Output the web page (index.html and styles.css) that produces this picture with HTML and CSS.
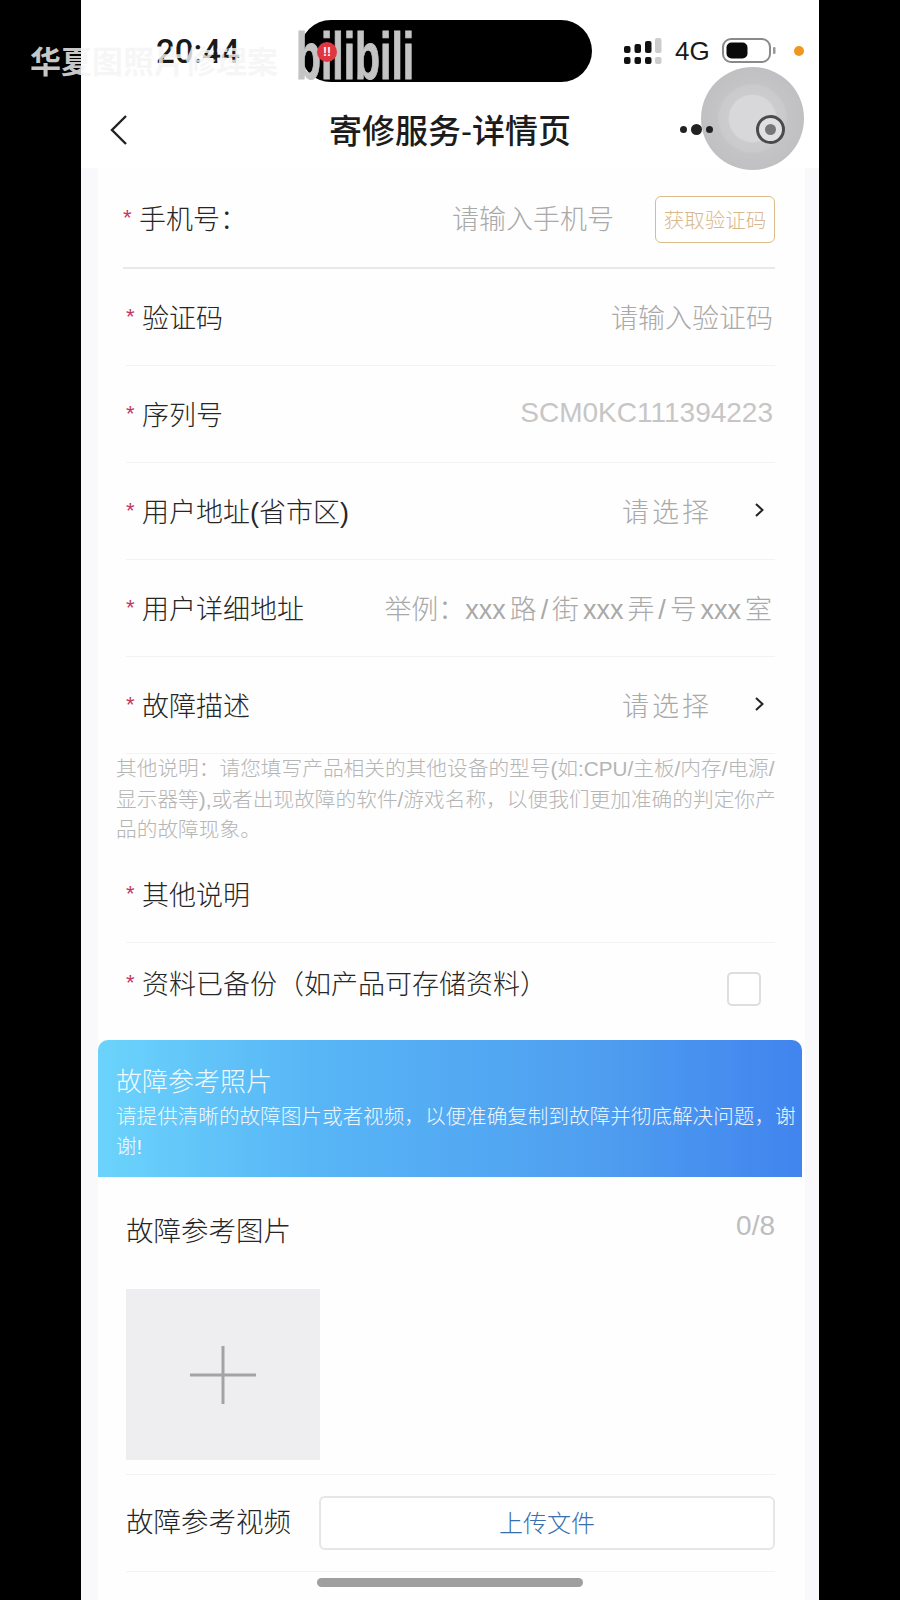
FILE: index.html
```html
<!DOCTYPE html>
<html lang="zh-CN">
<head>
    <meta charset="UTF-8">
    <meta name="viewport" content="width=device-width, initial-scale=1.0">
    <title>寄修服务-详情页</title>
    <link rel="stylesheet" href="styles.css">
</head>
<body>
    <div class="phone">
        <div class="status-bar">
            <span class="time">20:44</span>
            <div class="island">
                <span class="logo-text">bilibili</span>
                <span class="logo-dot">!!</span>
            </div>
            <div class="status-right">
                <svg class="signal" width="38" height="26" viewBox="0 0 38 26">
                    <rect x="0" y="8" width="6.5" height="7" rx="2" fill="#111"/>
                    <rect x="10.5" y="6" width="6.5" height="9" rx="2" fill="#111"/>
                    <rect x="21" y="3" width="6.5" height="12" rx="2" fill="#111"/>
                    <rect x="31" y="0" width="6.5" height="15" rx="2" fill="#ccc"/>
                    <rect x="0" y="19" width="6.5" height="7" rx="2" fill="#111"/>
                    <rect x="10.5" y="19" width="6.5" height="7" rx="2" fill="#111"/>
                    <rect x="21" y="19" width="6.5" height="7" rx="2" fill="#111"/>
                    <rect x="31" y="19" width="6.5" height="7" rx="2" fill="#ccc"/>
                </svg>
                <span class="net">4G</span>
                <svg class="battery" width="54" height="26" viewBox="0 0 54 26">
                    <rect x="1" y="1" width="47" height="23" rx="8" fill="#fff" stroke="#8a8a8a" stroke-width="2"/>
                    <rect x="4.5" y="4.5" width="21" height="16" rx="5" fill="#0a0a0a"/>
                    <rect x="51" y="9" width="2.5" height="7" rx="1" fill="#999"/>
                </svg>
                <span class="orange-dot"></span>
            </div>
        </div>

        <div class="nav-bar">
            <svg class="back" width="18" height="30" viewBox="0 0 18 30">
                <path d="M16 1 L2 15 L16 29" fill="none" stroke="#222" stroke-width="2.4"/>
            </svg>
            <h1 class="nav-title">寄修服务-详情页</h1>
        </div>

        <div class="float-ball"></div>
        <div class="menu-dots"><i></i><i class="big"></i><i></i></div>
        <div class="target"><i></i></div>

        <div class="content">
            <div class="card">
                <div class="row row-first">
                    <div class="label"><span class="star">*</span>手机号：</div>
                    <div class="placeholder">请输入手机号</div>
                    <button class="code-btn">获取验证码</button>
                </div>
                <div class="row">
                    <div class="label"><span class="star">*</span>验证码</div>
                    <div class="placeholder">请输入验证码</div>
                </div>
                <div class="row">
                    <div class="label"><span class="star">*</span>序列号</div>
                    <div class="placeholder serial">SCM0KC111394223</div>
                </div>
                <div class="row">
                    <div class="label"><span class="star">*</span>用户地址(省市区)</div>
                    <div class="placeholder pick">请选择</div>
                    <svg class="chevron" width="11" height="16" viewBox="0 0 11 16">
                        <path d="M2 2 L8.5 8 L2 14" fill="none" stroke="#222" stroke-width="2"/>
                    </svg>
                </div>
                <div class="row">
                    <div class="label"><span class="star">*</span>用户详细地址</div>
                    <div class="placeholder addr">举例：xxx 路 / 街 xxx 弄 / 号 xxx 室</div>
                </div>
                <div class="row">
                    <div class="label"><span class="star">*</span>故障描述</div>
                    <div class="placeholder pick">请选择</div>
                    <svg class="chevron" width="11" height="16" viewBox="0 0 11 16">
                        <path d="M2 2 L8.5 8 L2 14" fill="none" stroke="#222" stroke-width="2"/>
                    </svg>
                </div>

                <p class="note">其他说明：请您填写产品相关的其他设备的型号(如:CPU/主板/内存/电源/显示器等),或者出现故障的软件/游戏名称，以便我们更加准确的判定你产品的故障现象。</p>

                <div class="row">
                    <div class="label"><span class="star">*</span>其他说明</div>
                </div>
                <div class="row row-check">
                    <div class="label"><span class="star">*</span>资料已备份（如产品可存储资料）</div>
                    <span class="checkbox"></span>
                </div>

                <div class="banner">
                    <div class="banner-title">故障参考照片</div>
                    <div class="banner-desc">请提供清晰的故障图片或者视频，以便准确复制到故障并彻底解决问题，谢谢!</div>
                </div>

                <div class="upload-section">
                    <div class="upload-head">
                        <span class="upload-label">故障参考图片</span>
                        <span class="counter">0/8</span>
                    </div>
                    <div class="add-box">
                        <svg width="66" height="58" viewBox="0 0 66 58">
                            <path d="M0 29 H66 M33 0 V58" stroke="#a3a3a5" stroke-width="3" fill="none"/>
                        </svg>
                    </div>
                </div>

                <div class="row row-video">
                    <span class="upload-label">故障参考视频</span>
                    <button class="file-btn">上传文件</button>
                </div>
            </div>
        </div>

        <div class="home-bar"></div>
    </div>

    <div class="watermark">华夏图照片修理案</div>
</body>
</html>
```

FILE: styles.css
```css
* {
    box-sizing: border-box;
}

html, body {
    margin: 0;
    background-color: #000;
}

body {
    position: relative;
    font-family: "Liberation Sans", "Noto Sans CJK SC", sans-serif;
    color: #2b2b2b;
}

.phone {
    position: relative;
    width: 738px;
    height: 1600px;
    margin-left: 81px;
    background-color: #f9f9fc;
    overflow: hidden;
}

/* status bar */
.status-bar {
    height: 100px;
    background: #fff;
    display: flex;
    align-items: flex-start;
}

.time {
    width: 219px;
    padding: 32px 0 0 75px;
    font-family: Roboto, sans-serif;
    font-size: 33px;
    line-height: 40px;
    font-weight: 500;
    color: #1a1a1a;
}

.island {
    position: relative;
    width: 292px;
    height: 62px;
    margin-top: 20px;
    background: #000;
    border-radius: 31px;
}

.logo-text {
    position: absolute;
    left: -4px;
    top: 3px;
    font-size: 66px;
    line-height: 66px;
    font-weight: bold;
    color: #c4c4c4;
    -webkit-text-stroke: 1px #c4c4c4;
    transform: scaleX(0.62);
    transform-origin: left top;
}

.logo-dot {
    position: absolute;
    left: 17px;
    top: 22px;
    width: 20px;
    height: 20px;
    border-radius: 50%;
    background: #e0363f;
    color: #fff;
    font-size: 12px;
    line-height: 20px;
    font-weight: bold;
    text-align: center;
}

.status-right {
    display: flex;
    align-items: center;
    margin: 36px 0 0 32px;
}

.net {
    margin-left: 13px;
    font-size: 26px;
    line-height: 30px;
    color: #1a1a1a;
}

.battery {
    margin-left: 12px;
}

.orange-dot {
    width: 10px;
    height: 10px;
    margin-left: 18px;
    border-radius: 50%;
    background: #f0961e;
}

/* nav */
.nav-bar {
    position: relative;
    height: 68px;
    background: #fff;
    display: flex;
    align-items: center;
    justify-content: center;
}

.back {
    position: absolute;
    left: 29px;
    top: 15px;
}

.nav-title {
    margin: -4px 0 0 0;
    font-size: 33px;
    font-weight: 500;
    line-height: 46px;
    color: #1c1c1c;
}

.watermark {
    position: absolute;
    left: 30px;
    top: 45px;
    font-size: 31px;
    line-height: 36px;
    font-weight: bold;
    color: rgba(245, 245, 245, 0.82);
}

.float-ball {
    position: absolute;
    left: 620px;
    top: 67px;
    width: 103px;
    height: 103px;
    border-radius: 50%;
    background: radial-gradient(circle at 50% 50%, #d8d8da 0, #d8d8da 23px, #ccccce 24.5px, #cacacc 33px, #c4c4c6 35px, #c0c0c2 52px);
}

.menu-dots {
    position: absolute;
    left: 599px;
    top: 124px;
    display: flex;
    align-items: center;
    gap: 4px;
}

.menu-dots i {
    width: 7px;
    height: 7px;
    border-radius: 50%;
    background: #222;
}

.menu-dots i.big {
    width: 11px;
    height: 11px;
}

.target {
    position: absolute;
    left: 675px;
    top: 115px;
    width: 29px;
    height: 29px;
    border: 3px solid #4a4a4a;
    border-radius: 50%;
    background: #e0e0e2;
    display: flex;
    align-items: center;
    justify-content: center;
}

.target i {
    width: 11px;
    height: 11px;
    border-radius: 50%;
    background: #77777a;
}

/* form */
.content {
    padding: 0 14px 0 17px;
}

.card {
    background: #fefefe;
    height: 1432px;
}

.row {
    display: flex;
    align-items: center;
    height: 97px;
    margin: 0 30px 0 28px;
    padding-bottom: 2px;
    border-bottom: 1px solid #f3f3f3;
    font-size: 27px;
}

.row-first {
    height: 101px;
    margin-left: 25px;
    padding-bottom: 0;
    border-bottom: 2px solid #e9e9e9;
}

.label {
    flex-shrink: 0;
    color: #262626;
    font-weight: 300;
    white-space: nowrap;
}

.star {
    display: inline-block;
    width: 16px;
    font-size: 22px;
    vertical-align: 4px;
    line-height: 1;
    color: #c2385f;
}

.placeholder {
    flex: 1;
    padding-right: 2px;
    text-align: right;
    color: #a9a9a9;
    font-weight: 300;
    white-space: nowrap;
}

.row-first .placeholder {
    padding-right: 0;
}

.serial {
    font-size: 28px;
    color: #c6c6c6;
}

.pick {
    letter-spacing: 3px;
}

.addr {
    word-spacing: -3.6px;
    padding-right: 3px;
}

.code-btn {
    width: 120px;
    height: 47px;
    margin: 3px 0 0 41px;
    padding: 0;
    background: #fff;
    border: 1.5px solid #dcbb8c;
    border-radius: 6px;
    color: #d8b88e;
    font-size: 20.5px;
    font-weight: 300;
    font-family: inherit;
}

.chevron {
    margin: 0 10px 0 40px;
}

.note {
    margin: 0;
    padding: 0 28px 0 18px;
    height: 92px;
    font-size: 20.7px;
    line-height: 30.5px;
    font-weight: 300;
    color: #b5b5b5;
}

.row-check {
    border-bottom: none;
}

.row-check .label {
    margin-top: -16px;
}

.checkbox {
    width: 34px;
    height: 34px;
    margin: -4px 14px 0 auto;
    border: 2px solid #dedede;
    border-radius: 5px;
    background: #fff;
}

.banner {
    width: 704px;
    height: 137px;
    padding: 24px 0 0 18px;
    border-radius: 10px 10px 0 0;
    background: linear-gradient(90deg, #6bd3fb 0%, #58b6f6 30%, #4f9ff0 70%, #4184ee 100%);
    color: #fff;
}

.banner-title {
    font-size: 26px;
    line-height: 36px;
    font-weight: 300;
    opacity: 0.9;
}

.banner-desc {
    margin-top: 2px;
    font-size: 20.6px;
    line-height: 30px;
    font-weight: 300;
    opacity: 0.9;
}

.upload-section {
    height: 298px;
    margin: 0 30px 0 28px;
    border-bottom: 1px solid #f3f3f3;
}

.upload-head {
    display: flex;
    justify-content: space-between;
    padding-top: 35px;
    height: 112px;
}

.upload-label {
    font-size: 27.5px;
    line-height: 40px;
    font-weight: 300;
    color: #262626;
    flex-shrink: 0;
}

.counter {
    margin-top: -6px;
    font-size: 28px;
    line-height: 40px;
    color: #bdbdbd;
}

.add-box {
    width: 194px;
    height: 171px;
    background: #eeeef0;
    display: flex;
    align-items: center;
    justify-content: center;
}

.row-video {
    justify-content: space-between;
    padding-bottom: 0;
}

.file-btn {
    width: 456px;
    height: 54px;
    padding: 0 0 3px 0;
    background: #fff;
    border: 2px solid #e6e6e6;
    border-radius: 6px;
    color: #3a6fae;
    font-size: 24px;
    font-weight: 300;
    font-family: inherit;
}

.home-bar {
    position: absolute;
    left: 236px;
    top: 1578px;
    width: 266px;
    height: 9px;
    border-radius: 5px;
    background: #9f9f9f;
}
```
